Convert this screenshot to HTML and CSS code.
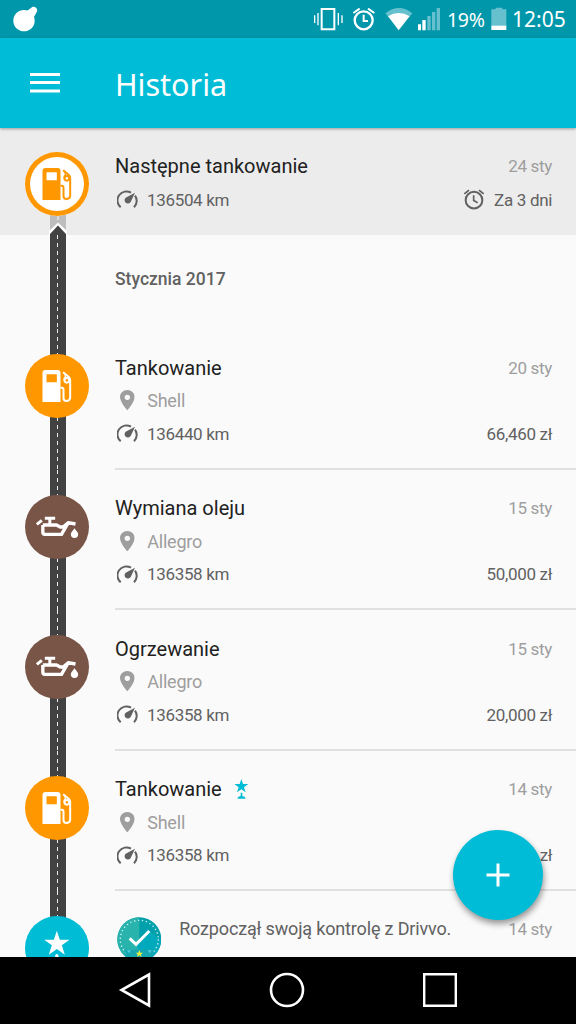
FILE: index.html
```html
<!DOCTYPE html>
<html lang="pl">
<head>
<meta charset="utf-8">
<title>Historia</title>
<link rel="stylesheet" href="styles.css">
</head>
<body>
<svg class="defs" width="0" height="0">
  <symbol id="fuel" viewBox="76.5 42 192 192">
    <path fill="currentColor" fill-rule="evenodd" d="M129 186V99q0-9 9-9h36q9 0 9 9v87zM141 103v24h31v-24z"/>
    <path fill="none" stroke="currentColor" stroke-width="6" d="M183 143h4q5 0 5 6v25q0 9 9 9t11-9v-54q0-5-4-9l-17-14"/>
    <circle cx="202" cy="121" r="7" fill="none" stroke="currentColor" stroke-width="6"/>
    <path fill="currentColor" d="M192 97l7 7 2 13-9 5v-7l4-6z"/>
  </symbol>
  <symbol id="oil" viewBox="76.5 43 192 192">
    <path fill="none" stroke="currentColor" stroke-width="10" stroke-linejoin="round" d="M130 133h41l11 6h9l15-13 22 4M205 128l-19 33h-50q-6 0-6-6v-22"/>
    <path fill="none" stroke="currentColor" stroke-width="9" d="M136 113h31M151 113v20M112 131l15-12"/>
    <path fill="currentColor" d="M225 143c-5 8-11 12-11 18a11 11 0 0 0 22 0c0-6-6-10-11-18z"/>
  </symbol>
  <symbol id="gauge" viewBox="350 251 63 56">
    <path fill="none" stroke="currentColor" stroke-width="6" d="M361 303a27 27 0 0 1 31-44M404 268a27 27 0 0 1-3 35"/>
    <path fill="currentColor" d="M404 259l-13 28a10 10 0 1 1-15-13z"/>
  </symbol>
  <symbol id="pin" viewBox="359 152 44 61">
    <path fill="currentColor" fill-rule="evenodd" d="M381 152c-12 0-22 9-22 21 0 16 22 40 22 40s22-24 22-40c0-12-10-21-22-21zM381 166a8 8 0 1 1 0 16 8 8 0 0 1 0-16z"/>
  </symbol>
  <symbol id="alarm" viewBox="370 176 60 62">
    <circle cx="400" cy="209" r="25" fill="none" stroke="currentColor" stroke-width="6"/>
    <path fill="none" stroke="currentColor" stroke-width="5" d="M399 194v16l12 7M371 190l14-11M429 190l-14-11"/>
  </symbol>
  <symbol id="award" viewBox="703 57 45 60">
    <path fill="currentColor" d="M725 57l5 15h16l-13 10 5 15-13-9-13 9 5-15-13-10h16zM723 98h5v10q9 1 10 8h-25q1-7 10-8z"/>
  </symbol>
</svg>
<div class="screen">
  <header class="status">
    <svg class="notif" width="26" height="26" viewBox="36 18 78 78"><circle cx="72" cy="62" r="32" fill="#fff"/><path d="M80 36l14-10a8 8 0 1 1 14 10l-9 16z" fill="#fff" stroke="#fff" stroke-width="4"/></svg>
    <svg class="tray" width="130" height="26" viewBox="72 18 390 78">
      <g fill="none" stroke="#fff">
        <path stroke-width="6" d="M98 27h38v61H98z"/>
        <path stroke-width="4" d="M77 46v23M87 39v37M148 39v37M159 46v23"/>
        <circle cx="224" cy="61" r="27" stroke-width="7"/>
        <path stroke-width="6" d="M224 44v19h13M193 39l19-13M256 39l-19-13"/>
      </g>
      <path fill="#67c0cd" d="M289 40q41-32 81 0l-10 12q-31-22-61 0z"/>
      <path fill="#fff" d="M297 49q32-20 65 0l-33 42z"/>
      <path fill="#fff" d="M387 73h9v18h-9zM400 60h10v31h-10z"/>
      <path fill="#67c0cd" d="M415 48h10v43h-10zM429 36h10v55h-10zM443 24h10v67h-10z"/>
    </svg>
    <span class="pct">19%</span>
    <svg class="battery" width="16" height="24" viewBox="608 22 48 72"><path fill="#67c0cd" d="M622 24h20v5h12v50h-45V29h13z"/><path fill="#fff" d="M609 78h45v13h-45z"/></svg>
    <span class="clock">12:05</span>
  </header>
  <div class="appbar">
    <svg width="32" height="22" viewBox="0 0 32 22"><path stroke="#fff" stroke-width="3" d="M1 2.500h30M1 10.500h30M1 19h30"/></svg>
    <h1>Historia</h1>
  </div>
  <main class="list">
    <section class="entry next">
      <div class="rail">
        <svg class="roadhead" width="18" height="22" viewBox="0 0 18 22"><path fill="#bdbdbd" d="M1 0h16v22H1z"/><path stroke="#e8e8e8" stroke-width="1.4" d="M9 2v5"/><path fill="#fff" d="M0 18L9 9.500l9 8.500v4H0z"/><path fill="#424242" d="M1 21l8-8.500 8 8.500v1H1z"/></svg>
        <div class="dot ring"><svg><use href="#fuel"/></svg></div>
      </div>
      <div class="body">
        <div class="line top"><h2>Następne tankowanie</h2><time>24 sty</time></div>
        <div class="line meta"><svg class="gauge"><use href="#gauge"/></svg><span>136504 km</span><span class="due"><svg class="alarm"><use href="#alarm"/></svg>Za 3 dni</span></div>
      </div>
    </section>
    <section class="month"><div class="rail road"></div><h3>Stycznia 2017</h3></section>
    <section class="entry">
      <div class="rail road"><div class="dot fuel"><svg><use href="#fuel"/></svg></div></div>
      <div class="body ruled">
        <div class="line top"><h2>Tankowanie</h2><time>20 sty</time></div>
        <div class="line place"><svg class="pin"><use href="#pin"/></svg><span>Shell</span></div>
        <div class="line meta"><svg class="gauge"><use href="#gauge"/></svg><span>136440 km</span><span class="cost">66,460 zł</span></div>
      </div>
    </section>
    <section class="entry">
      <div class="rail road"><div class="dot service"><svg><use href="#oil"/></svg></div></div>
      <div class="body ruled">
        <div class="line top"><h2>Wymiana oleju</h2><time>15 sty</time></div>
        <div class="line place"><svg class="pin"><use href="#pin"/></svg><span>Allegro</span></div>
        <div class="line meta"><svg class="gauge"><use href="#gauge"/></svg><span>136358 km</span><span class="cost">50,000 zł</span></div>
      </div>
    </section>
    <section class="entry">
      <div class="rail road"><div class="dot service"><svg><use href="#oil"/></svg></div></div>
      <div class="body ruled">
        <div class="line top"><h2>Ogrzewanie</h2><time>15 sty</time></div>
        <div class="line place"><svg class="pin"><use href="#pin"/></svg><span>Allegro</span></div>
        <div class="line meta"><svg class="gauge"><use href="#gauge"/></svg><span>136358 km</span><span class="cost">20,000 zł</span></div>
      </div>
    </section>
    <section class="entry">
      <div class="rail road"><div class="dot fuel"><svg><use href="#fuel"/></svg></div></div>
      <div class="body ruled">
        <div class="line top"><h2>Tankowanie</h2><svg class="award"><use href="#award"/></svg><time>14 sty</time></div>
        <div class="line place"><svg class="pin"><use href="#pin"/></svg><span>Shell</span></div>
        <div class="line meta"><svg class="gauge"><use href="#gauge"/></svg><span>136358 km</span><span class="cost">zł</span></div>
      </div>
    </section>
    <section class="entry">
      <div class="rail road"><div class="dot start"><svg viewBox="76.500 107 192 192"><path fill="#fff" d="M172 151l9 27h29l-23 17 9 28-24-17-24 17 9-28-23-17h29zM167 228q0-7 5-7t5 7v20h-10z"/></svg></div></div>
      <div class="body">
        <div class="line achievement">
          <svg class="badge" viewBox="350 112 134 134">
            <circle cx="417" cy="179" r="66" fill="#009fac"/><path fill="#29b3ad" d="M417 113a66 66 0 0 0 0 132z"/><path fill="#01a9bd" d="M442 148l40 36a66 66 0 0 1-48 58l-25-42z"/>
            <circle cx="417" cy="179" r="57" fill="none" stroke="#c9f2ef" stroke-width="4" stroke-dasharray="4 7.940"/>
            <path fill="#16a7b3" d="M375 210h84v35h-84z"/>
            <path fill="none" stroke="#fff" stroke-width="9" d="M388 176l19 18 40-40"/>
            <path fill="#e6ee3c" d="M417 211l3 8h8l-6 5 2 8-7-5-7 5 2-8-6-5h8z"/>
            <path fill="#55cbe0" d="M380 212h12l-6 9zM442 212h12l-6 9z"/>
          </svg>
          <p>Rozpoczął swoją kontrolę z Drivvo.</p><time>14 sty</time>
        </div>
      </div>
    </section>
  </main>
  <button class="fab" aria-label="Dodaj"><svg width="24" height="24"><path stroke="#fff" stroke-width="3" d="M12 .5v23M.5 12h23"/></svg></button>
  <nav class="navbar">
    <svg width="34" height="36" viewBox="0 0 34 36"><path fill="none" stroke="#fff" stroke-width="2.600" d="M31 2.500v31L3.500 18z"/></svg>
    <svg width="36" height="36" viewBox="0 0 36 36"><circle cx="18" cy="18" r="16" fill="none" stroke="#fff" stroke-width="2.600"/></svg>
    <svg width="36" height="36" viewBox="0 0 36 36"><path fill="none" stroke="#fff" stroke-width="2.400" d="M2.200 2.200h31.600v31.600H2.200z"/></svg>
  </nav>
</div>
</body>
</html>
```
FILE: styles.css
```css
* { box-sizing: border-box; margin: 0; padding: 0; }
body { font-family: Roboto, sans-serif; color: #212121; }
svg { display: block; flex: none; }
.defs { position: absolute; }
.screen { position: relative; width: 576px; height: 1024px; display: flex; flex-direction: column; overflow: hidden; background: #fafafa; }
.status { height: 38px; flex: none; display: flex; align-items: center; padding: 0 8px 0 12px; background: #0097ab; color: #fff; font: 20px "Noto Sans", sans-serif; }
.tray { margin-left: auto; }
.pct { width: 40px; margin-left: 4px; font-size: 19.500px; letter-spacing: -.3px; white-space: nowrap; }
.battery { margin-left: 4px; }
.clock { width: 56px; margin-left: 5px; font-size: 21px; white-space: nowrap; }
.appbar { position: relative; z-index: 1; height: 90px; flex: none; display: flex; align-items: center; padding-left: 28.500px; background: #00bcd6; box-shadow: 0 1px 3px rgba(0,0,0,.35); }
.appbar h1 { margin: 1px 0 0 54.500px; color: #fff; font: 400 30.500px "Noto Sans", sans-serif; }
.list { flex: 1; min-height: 0; overflow: hidden; }
.entry { height: 140.5px; display: flex; }
.next { height: 107px; background: #ececec; }
.rail { position: relative; width: 115px; flex: none; padding: 25px 0 0 25px; }
.next .rail { padding-top: 24px; }
.roadhead { position: absolute; left: 48.500px; bottom: 0; }
.road { background: repeating-linear-gradient(#eee 0 4px, #424242 4px 8px) 57px 0 / 1px 100% no-repeat, linear-gradient(#424242, #424242) 49.500px 0 / 16px 100% no-repeat; }
.entry:last-child .road { background-size: 1px 30px, 16px 30px; }
.dot { position: relative; width: 64px; height: 64px; border-radius: 50%; color: #fff; }
.dot svg { width: 64px; height: 64px; }
.ring { background: #fff; color: #ff9800; box-shadow: inset 0 0 0 5px #ff9800; }
.fuel { background: #ff9800; }
.service { background: #795548; }
.start { background: #00bcd4; }
.body { flex: 1; padding-top: 24px; }
.next .body { padding-top: 23px; }
.ruled { border-bottom: 2px solid #e0e0e0; }
.line { display: flex; align-items: center; padding-right: 24px; height: 33px; font-size: 17px; letter-spacing: -.33px; color: #616161; }
.top { height: 29px; }
h2 { font-size: 20px; font-weight: 400; letter-spacing: 0; color: #212121; }
time { margin-left: auto; font-size: 17px; color: #9e9e9e; }
.place { height: 37px; color: #9e9e9e; }
.place span { font-size: 18px; letter-spacing: -.2px; }
.meta { height: 29px; }
.next .meta { height: 39px; }
.gauge { width: 21px; height: 18.670px; margin: 0 9.500px 0 1.500px; }
.pin { width: 14.670px; height: 20.330px; margin: 0 12.500px 0 5px; }
.alarm { width: 20px; height: 21px; }
.cost { margin-left: auto; }
.due { margin-left: auto; display: flex; align-items: center; gap: 10px; }
.award { width: 15px; height: 20px; margin-left: 12px; color: #00bcd4; }
.month { height: 94px; display: flex; }
.month h3 { padding-top: 34px; font-size: 17.500px; font-weight: 500; color: #616161; }
.achievement { height: 46px; align-items: flex-start; padding-top: 2px; }
.achievement p { margin: 1px 0 0 18px; font-size: 18px; letter-spacing: -.16px; }
.achievement time { margin-top: 2px; }
.badge { width: 44.670px; height: 44.670px; margin-left: 1.500px; }
.fab { position: absolute; left: 452.500px; top: 830px; width: 90px; height: 90px; border: 0; border-radius: 50%; display: grid; place-items: center; background: #00bcd6; box-shadow: 1px 4px 6px rgba(0,0,0,.4); }
.navbar { height: 67px; flex: none; display: flex; align-items: center; justify-content: space-between; padding: 0 118px 1px; background: #000; }
```
